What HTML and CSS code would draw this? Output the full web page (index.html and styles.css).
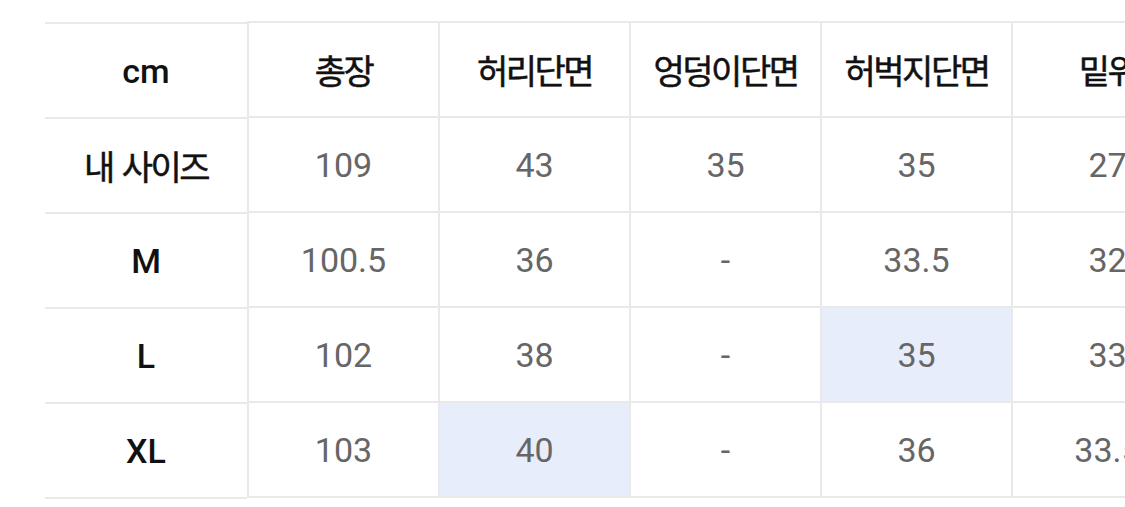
FILE: index.html
```html
<!DOCTYPE html>
<html lang="ko">
<head>
<meta charset="utf-8">
<title>사이즈 표</title>
<link rel="stylesheet" href="styles.css">
</head>
<body>
<div class="size-table">
  <div class="fixed-col">
    <div class="fcell">cm</div>
    <div class="fcell ko">내 사이즈</div>
    <div class="fcell">M</div>
    <div class="fcell">L</div>
    <div class="fcell">XL</div>
  </div>
  <div class="scroll">
    <div class="grid">
      <div class="cell head ko">총장</div>
      <div class="cell head ko">허리단면</div>
      <div class="cell head ko">엉덩이단면</div>
      <div class="cell head ko">허벅지단면</div>
      <div class="cell head ko">밑위</div>

      <div class="cell">109</div>
      <div class="cell">43</div>
      <div class="cell">35</div>
      <div class="cell">35</div>
      <div class="cell">27</div>

      <div class="cell">100.5</div>
      <div class="cell">36</div>
      <div class="cell">-</div>
      <div class="cell">33.5</div>
      <div class="cell">32</div>

      <div class="cell">102</div>
      <div class="cell">38</div>
      <div class="cell">-</div>
      <div class="cell hl">35</div>
      <div class="cell">33</div>

      <div class="cell last">103</div>
      <div class="cell last hl">40</div>
      <div class="cell last">-</div>
      <div class="cell last">36</div>
      <div class="cell last">33.5</div>
    </div>
  </div>
</div>
</body>
</html>
```

FILE: styles.css
```css
html, body {
  margin: 0;
  padding: 0;
  background: #ffffff;
}

body {
  font-family: Roboto, "Noto Sans CJK KR", sans-serif;
  font-size: 34px;
  width: 1125px;
  height: 507px;
  overflow: hidden;
}

.size-table {
  display: flex;
  align-items: flex-start;
  padding: 21px 0 0 45px;
}

.fixed-col {
  flex: 0 0 202px;
  display: flex;
  flex-direction: column;
  margin-top: 1px;
}

.fcell {
  height: 93px;
  border-top: 2px solid #e9e9e9;
  display: flex;
  align-items: center;
  justify-content: center;
  color: #111111;
  font-weight: 500;
}

.fcell:last-child {
  border-bottom: 2px solid #e9e9e9;
}

.scroll {
  flex: 1 1 auto;
  overflow: hidden;
}

.grid {
  display: grid;
  grid-template-columns: repeat(5, 191px);
  width: 955px;
}

.cell {
  height: 93px;
  border-top: 2px solid #e9e9e9;
  border-left: 2px solid #e9e9e9;
  display: flex;
  align-items: center;
  justify-content: center;
  color: #666666;
  white-space: nowrap;
}

.cell.head {
  color: #111111;
}

.ko {
  font-weight: 400;
  letter-spacing: -2.5px;
  word-spacing: 3px;
  -webkit-text-stroke: 0.5px currentColor;
}

.fcell.ko {
  font-weight: 400;
}

.cell.last {
  border-bottom: 2px solid #e9e9e9;
}

.cell.hl {
  background: #e8edfc;
}
```
